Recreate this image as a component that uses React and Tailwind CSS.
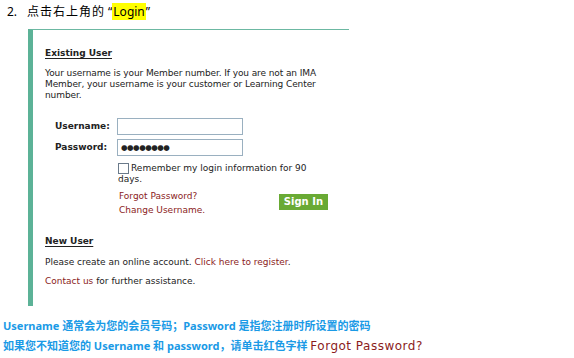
import React from "react";

const verdana = { fontFamily: '"DejaVu Sans", Verdana, sans-serif' };

const App = () => {
  return (
    <div className="w-[574px] h-[358px] bg-white relative overflow-hidden">
      {/* heading */}
      <div className="flex items-center pt-[4px] pl-[7px] text-[12px] text-black font-['Noto_Sans','Noto_Sans_CJK_SC',sans-serif] leading-[16px]">
        <span className="w-[20px]">2.</span>
        <span className="tracking-[1px]">点击右上角的</span>
        <span className="ml-[3px]">“<span className="bg-[#ffff00] px-[1px]">Login</span>”</span>
      </div>

      {/* login panel */}
      <div
        className="ml-[28px] mt-[9px] w-[321px] h-[277px] border-t border-[#6cb8a2] border-l-[5px] border-l-[#5cb297] pl-[12px] text-[9px] text-[#222] leading-[11px]"
        style={verdana}
      >
        <div className="pt-[18px] font-bold underline underline-offset-2">Existing User</div>
        <p className="mt-[9px] pr-[14px] tracking-[-0.1px]">
          Your username is your Member number. If you are not an IMA Member, your username is your customer or Learning Center number.
        </p>

        <div className="mt-[17px] ml-[10px] flex flex-col gap-[4px]">
          <div className="flex items-center">
            <span className="w-[62px] font-bold">Username:</span>
            <div className="w-[126px] h-[17px] border border-[#9ab0c0]" />
          </div>
          <div className="flex items-center">
            <span className="w-[62px] font-bold">Password:</span>
            <div className="w-[126px] h-[17px] border border-[#9ab0c0] flex items-center pl-[3px] text-[7.5px] tracking-[-0.5px]">
              ●●●●●●●●
            </div>
          </div>
        </div>

        <div className="ml-[73px] mt-[7px] w-[200px]">
          <div className="flex items-end">
            <span className="w-[11px] h-[11px] border border-[#6a7a8a] mr-[2px] inline-block" />
            <span>Remember my login information for 90</span>
          </div>
          <div>days.</div>
        </div>

        <div className="ml-[74px] mt-[6px] w-[209px] flex justify-between items-start">
          <div className="flex flex-col gap-[3px] text-[#8b1c1c]">
            <span>Forgot Password?</span>
            <span>Change Username.</span>
          </div>
          <div className="mt-[3px] bg-[#69aa34] text-white font-bold text-[10px] px-[5px] h-[16px] leading-[16px]">Sign In</div>
        </div>

        <div className="mt-[20px] font-bold underline underline-offset-2">New User</div>
        <p className="mt-[10px]">
          Please create an online account. <span className="text-[#8b1c1c]">Click here to register</span>.
        </p>
        <p className="mt-[8px]">
          <span className="text-[#8b1c1c]">Contact us</span> for further assistance.
        </p>
      </div>

      {/* notes */}
      <div className="pl-[3px] mt-[10px] text-[11px] font-bold text-[#1a9ae6] leading-[20px] font-['Noto_Sans','Noto_Sans_CJK_SC',sans-serif]">
        <div>Username 通常会为您的会员号码；Password 是指您注册时所设置的密码</div>
        <div>
          如果您不知道您的 Username 和 password，请单击红色字样{" "}
          <span className="font-normal text-[#8b1c1c] text-[12px] tracking-[0.5px]" style={verdana}>Forgot Password?</span>
        </div>
      </div>
    </div>
  );
};

export default App;
